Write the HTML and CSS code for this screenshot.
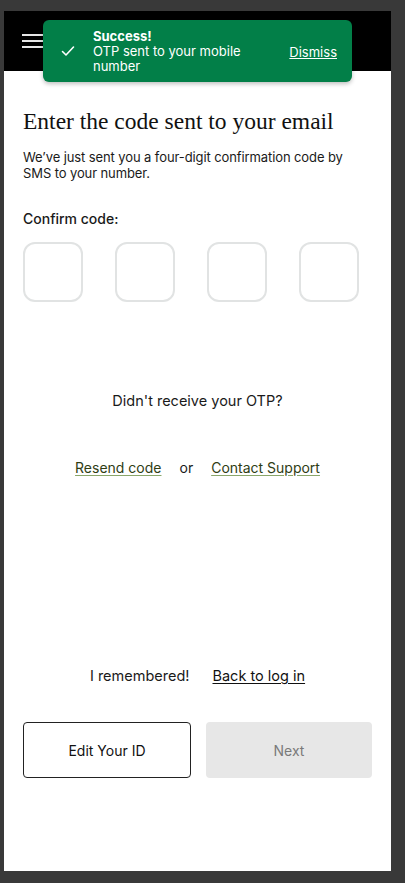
FILE: index.html
```html
<!DOCTYPE html>
<html lang="en">
<head>
    <meta charset="UTF-8">
    <meta name="viewport" content="width=device-width, initial-scale=1.0">
    <title>Confirm code</title>
    <link rel="stylesheet" href="styles.css">
</head>
<body>
    <div class="frame">
        <!-- Barre du haut -->
        <header class="topbar">
            <button class="menu-btn" aria-label="Menu">
                <span></span><span></span><span></span>
            </button>
        </header>

        <!-- Notification -->
        <div class="toast">
            <svg class="toast-check" width="14" height="12" viewBox="0 0 14 12">
                <path d="M1.5 6.5 L5 10 L12.5 2" fill="none" stroke="#fff" stroke-width="1.6" stroke-linecap="round" stroke-linejoin="round"/>
            </svg>
            <div class="toast-text">
                <strong>Success!</strong>
                <span>OTP sent to your mobile number</span>
            </div>
            <a href="#" class="toast-dismiss">Dismiss</a>
        </div>

        <main class="content">
            <h1>Enter the code sent to your email</h1>
            <p class="intro">We’ve just sent you a four-digit confirmation code by SMS to your number.</p>

            <label class="code-label">Confirm code:</label>
            <div class="code-inputs">
                <input type="text" maxlength="1">
                <input type="text" maxlength="1">
                <input type="text" maxlength="1">
                <input type="text" maxlength="1">
            </div>

            <p class="no-otp">Didn't receive your OTP?</p>
            <div class="resend">
                <a href="#">Resend code</a>
                <span>or</span>
                <a href="#">Contact Support</a>
            </div>

            <div class="remembered">
                <span>I remembered!</span>
                <a href="#">Back to log in</a>
            </div>

            <div class="actions">
                <button class="btn btn-outline">Edit Your ID</button>
                <button class="btn btn-disabled" disabled>Next</button>
            </div>
        </main>
    </div>
</body>
</html>
```

FILE: styles.css
```css
html, body {
    margin: 0;
    padding: 0;
}
body {
    background-color: #393939;
    font-family: Inter, "Liberation Sans", sans-serif;
    color: #1a1a1a;
    height: 883px;
    overflow: hidden;
}
.frame {
    position: relative;
    width: 387px;
    height: 860px;
    margin: 11px 0 0 4px;
    background: #fff;
}
.topbar {
    height: 60px;
    background: #000;
    display: flex;
    align-items: center;
    padding-left: 18px;
}
.menu-btn {
    background: none;
    border: none;
    padding: 0;
    display: flex;
    flex-direction: column;
    gap: 4px;
    cursor: pointer;
}
.menu-btn span {
    display: block;
    width: 22px;
    height: 2px;
    background: #e6e6e6;
}
.toast {
    position: absolute;
    left: 39px;
    top: 9px;
    width: 309px;
    height: 62px;
    box-sizing: border-box;
    background: #027f48;
    border-radius: 6px;
    box-shadow: 0 2px 4px rgba(0, 0, 0, 0.25);
    display: flex;
    align-items: center;
    padding: 0 15px 0 18px;
    color: #fff;
    font-size: 13px;
    line-height: 15px;
}
.toast-check {
    flex: none;
    margin-right: 18px;
}
.toast-text {
    display: flex;
    flex-direction: column;
    width: 160px;
}
.toast-text strong {
    font-weight: 700;
}
.toast-dismiss {
    margin-left: auto;
    color: #fff;
    text-decoration: underline;
    margin-top: 2px;
}
.content {
    padding: 0 19px;
}
h1 {
    font-family: "Liberation Serif", serif;
    font-weight: 400;
    font-size: 23.5px;
    line-height: 28px;
    margin: 36px 0 0;
    color: #111;
}
.intro {
    font-size: 13px;
    line-height: 16px;
    margin: 14px 0 0;
    letter-spacing: -0.1px;
}
.code-label {
    display: block;
    font-size: 14px;
    font-weight: 500;
    margin-top: 29px;
    line-height: 18px;
}
.code-inputs {
    display: flex;
    gap: 32px;
    margin-top: 14px;
}
.code-inputs input {
    width: 60px;
    height: 60px;
    box-sizing: border-box;
    border: 2px solid #e1e3e3;
    border-radius: 12px;
    outline: none;
    text-align: center;
    font-size: 20px;
}
.no-otp {
    text-align: center;
    font-size: 14.5px;
    line-height: 20px;
    margin: 89px 0 0;
}
.resend {
    display: flex;
    justify-content: center;
    gap: 18px;
    margin-top: 47px;
    font-size: 14px;
    line-height: 20px;
}
.resend a {
    color: #2f3d14;
    text-decoration: underline;
    text-decoration-color: #8aa66a;
    text-underline-offset: 2px;
}
.remembered {
    display: flex;
    justify-content: center;
    gap: 23px;
    margin-top: 188px;
    font-size: 14.5px;
    line-height: 20px;
}
.remembered a {
    color: #111;
    text-decoration: underline;
    text-underline-offset: 2px;
}
.actions {
    display: flex;
    gap: 15px;
    margin-top: 36px;
}
.btn {
    flex: 1;
    height: 56px;
    font-family: inherit;
    font-size: 14px;
    border-radius: 4px;
    cursor: pointer;
}
.btn-outline {
    background: #fff;
    border: 1px solid #222;
    color: #111;
}
.btn-disabled {
    background: #e7e7e7;
    border: none;
    color: #7a7a7a;
    cursor: default;
}
```
